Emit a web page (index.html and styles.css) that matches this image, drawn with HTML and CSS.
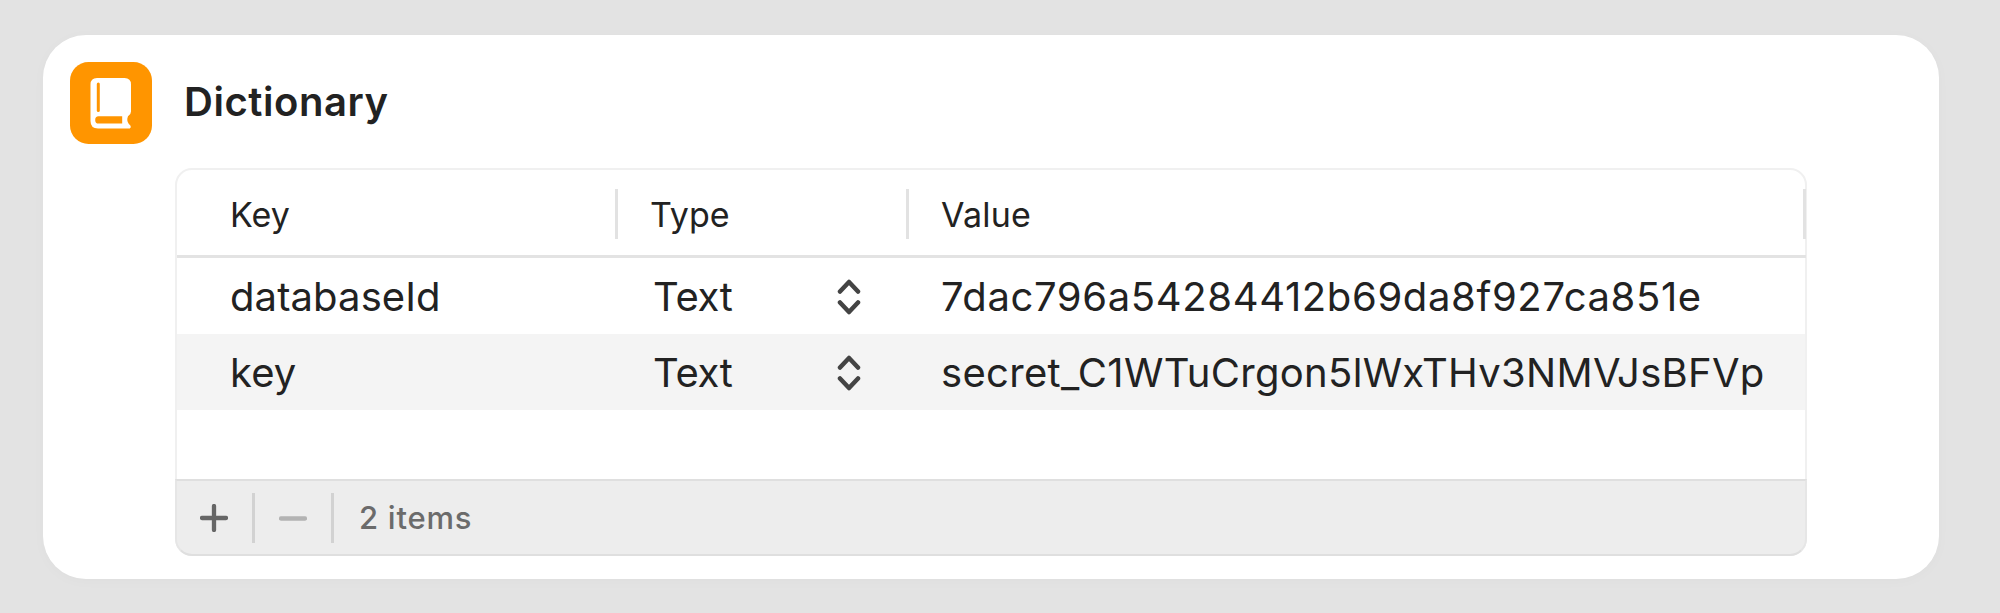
FILE: index.html
```html
<!DOCTYPE html>
<html lang="en">
<head>
<meta charset="utf-8">
<title>Dictionary</title>
<link rel="stylesheet" href="styles.css">
</head>
<body>
<main class="card">
  <header class="card-header">
    <svg class="app-icon" viewBox="0 0 82 82" aria-hidden="true">
      <rect width="82" height="82" rx="18.5" fill="#ff9500"/>
      <path fill="#fff" d="M27 16H54.500Q61 16 61 22.500V49.500Q61 52.500 58 54.200Q56.300 58 58.500 61.500L60.500 63.700Q61.500 66.500 58.500 66.500H28Q20.500 66.500 20.500 59V22.500Q20.500 16 27 16Z"/>
      <path fill="#ff9500" d="M28.500 54.300H52.200V61.500H28.500Q25.200 61.500 25.200 57.900Q25.200 54.300 28.500 54.300Z"/>
      <path stroke="#ff9500" stroke-width="3" stroke-linecap="round" d="M28.300 22V48.500"/>
    </svg>
    <h1 class="title">Dictionary</h1>
  </header>
  <section class="table">
    <div class="row head">
      <div class="cell">Key</div>
      <div class="cell type">Type</div>
      <div class="cell value">Value</div>
    </div>
    <div class="row">
      <div class="cell name">databaseId</div>
      <div class="cell type"><span class="kind">Text</span>
        <svg class="stepper" viewBox="0 0 24 36"><path d="M3 12.500L12 3L21 12.500M3 23.500L12 33L21 23.500"/></svg>
      </div>
      <div class="cell value hash">7dac796a54284412b69da8f927ca851e</div>
    </div>
    <div class="row striped">
      <div class="cell name">key</div>
      <div class="cell type"><span class="kind">Text</span>
        <svg class="stepper" viewBox="0 0 24 36"><path d="M3 12.500L12 3L21 12.500M3 23.500L12 33L21 23.500"/></svg>
      </div>
      <div class="cell value secret">secret_C1WTuCrgon5lWxTHv3NMVJsBFVp</div>
    </div>
    <footer class="footer">
      <div class="tool"><svg class="glyph" viewBox="0 0 28 28"><path d="M2 14H26M14 2V26"/></svg></div>
      <div class="tool disabled"><svg class="glyph" viewBox="0 0 28 28"><path d="M2 14.500H26"/></svg></div>
      <div class="count">2 items</div>
    </footer>
  </section>
</main>
</body>
</html>
```

FILE: styles.css
```css
* { box-sizing: border-box; }
body {
  margin: 0;
  height: 613px;
  padding: 35px 61px 34px 43px;
  background: #e3e3e3;
  color: #222;
  font-family: Inter, "Liberation Sans", sans-serif;
  overflow: hidden;
}
.card {
  height: 544px;
  padding: 27px 132px 0 27px;
  border-radius: 43px;
  background: #fff;
  box-shadow: 0 2px 14px rgba(0, 0, 0, 0.025);
}
.card-header { display: flex; align-items: center; height: 82px; gap: 32px; }
.app-icon { width: 82px; height: 82px; }
.title { margin: 0; padding-bottom: 3px; font-size: 40px; font-weight: 630; line-height: 48px; letter-spacing: 0.55px; }
.table {
  display: flex;
  flex-direction: column;
  width: 1632px;
  height: 388px;
  margin: 24px 0 0 105px;
  border: 2px solid #f0f0f0;
  border-radius: 17px;
  background: #fff;
}
.row {
  display: grid;
  grid-template-columns: 441px 291px 1fr;
  height: 76px;
  align-items: center;
  font-size: 40px;
  line-height: 48px;
  white-space: nowrap;
}
.cell { padding: 2px 0 0 33px; }
.cell:first-child { padding-left: 53px; }
.head { height: 88px; padding-top: 2px; margin-right: -1px; border-bottom: 3px solid #e3e3e3; font-size: 34px; }
.head .cell { height: 50px; border-right: 3px solid #e2e2e2; }
.head .value { letter-spacing: 0.2px; }
.cell.type { display: flex; align-items: center; padding-left: 32px; }
.cell.value { padding-left: 32px; }
.striped { background: #f4f4f4; }
.name { letter-spacing: 0.1px; }
.kind { width: 187px; padding-left: 3px; letter-spacing: -0.3px; }
.hash { letter-spacing: 0.64px; }
.secret { letter-spacing: 0.3px; }
.stepper { width: 24px; height: 36px; }
.stepper path { fill: none; stroke: #444; stroke-width: 4.5; stroke-linecap: round; stroke-linejoin: round; }
.footer {
  display: flex;
  align-items: center;
  height: 77px;
  margin: auto -2px -2px;
  border: 2px solid #dfdfdf;
  border-right-color: #e6e6e6;
  border-left-color: #e6e6e6;
  border-radius: 0 0 17px 17px;
  background: #ededed;
}
.tool {
  display: flex;
  align-items: center;
  width: 79px;
  height: 50px;
  padding-left: 24px;
  border-right: 3px solid #d2d2d2;
}
.tool:first-child { width: 78px; padding-left: 23px; }
.glyph { width: 28px; height: 28px; fill: none; stroke: #666; stroke-width: 4.300; stroke-linecap: round; }
.disabled .glyph { stroke: #b3b3b3; }
.count { padding-left: 25px; color: #6b6b6b; font-size: 31px; font-weight: 540; letter-spacing: 0.75px; }
```
